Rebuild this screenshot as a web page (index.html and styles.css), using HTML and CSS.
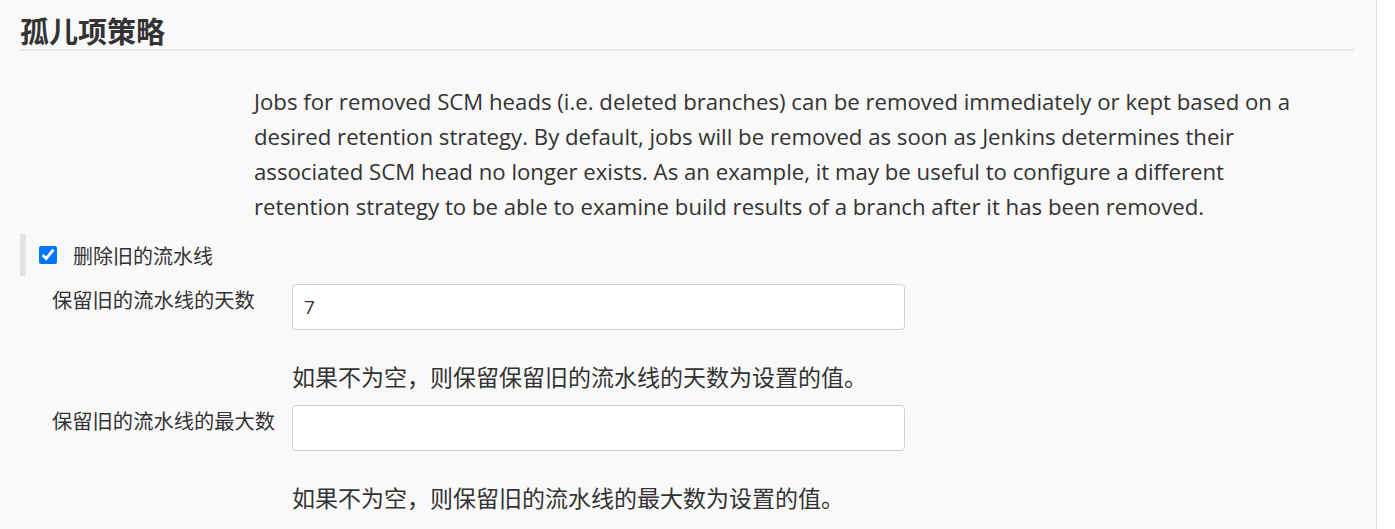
FILE: index.html
```html
<!DOCTYPE html>
<html lang="zh-CN">
<head>
<meta charset="utf-8">
<title>孤儿项策略</title>
<link rel="stylesheet" href="styles.css">
</head>
<body>
<div class="page">
  <main class="content">
    <h2 class="section-title">孤儿项策略</h2>
    <div class="description">Jobs for removed SCM heads (i.e. deleted branches) can be removed immediately or kept based on a desired retention strategy. By default, jobs will be removed as soon as Jenkins determines their associated SCM head no longer exists. As an example, it may be useful to configure a different retention strategy to be able to examine build results of a branch after it has been removed.</div>
    <div class="optional-block">
      <label class="check-row"><input type="checkbox" class="check" checked><span class="check-label">删除旧的流水线</span></label>
    </div>
    <div class="field">
      <div class="field-label">保留旧的流水线的天数</div>
      <div class="field-body">
        <input class="text-input" type="text" value="7">
        <div class="help">如果不为空，则保留保留旧的流水线的天数为设置的值。</div>
      </div>
    </div>
    <div class="field">
      <div class="field-label">保留旧的流水线的最大数</div>
      <div class="field-body">
        <input class="text-input" type="text" value="">
        <div class="help">如果不为空，则保留旧的流水线的最大数为设置的值。</div>
      </div>
    </div>
  </main>
  <aside class="gutter"></aside>
</div>
</body>
</html>
```

FILE: styles.css
```css
html, body {
  margin: 0;
  padding: 0;
  background: #f9f9f9;
}
body {
  font-family: "Open Sans", "Noto Sans CJK SC", sans-serif;
  color: #333;
  height: 529px;
  overflow: hidden;
}
.page {
  display: flex;
  height: 529px;
}
.content {
  flex: 1;
  padding: 0 22px 0 20px;
  background: #f9f9f9;
}
.gutter {
  width: 18px;
  border-left: 1px solid #d9d9d9;
  background: #fff;
}
.section-title {
  margin: 0;
  padding-top: 14px;
  padding-bottom: 3px;
  font-family: "Noto Sans CJK SC", sans-serif;
  font-size: 29px;
  line-height: 32px;
  font-weight: 700;
  color: #333;
  border-bottom: 2px solid #e9e9e9;
}
.description {
  margin: 33px 0 0 234px;
  width: 1070px;
  font-size: 22.2px;
  line-height: 35px;
  color: #333;
}
.optional-block {
  margin-top: 10px;
  border-left: 6px solid #e3e3e3;
  height: 42px;
  display: flex;
  align-items: center;
}
.check-row {
  display: flex;
  align-items: center;
  padding-left: 13px;
}
.check {
  margin: 0;
  width: 18px;
  height: 18px;
  accent-color: #0075ff;
}
.check-label {
  margin-left: 16px;
  font-family: "Noto Sans CJK SC", sans-serif;
  font-size: 20px;
  color: #333;
}
.field {
  display: flex;
  margin-top: 8px;
}
.field-label {
  width: 240px;
  padding-left: 32px;
  font-family: "Noto Sans CJK SC", sans-serif;
  font-size: 20.3px;
  line-height: 28px;
  color: #333;
  padding-top: 1px;
}
.field-body {
  display: flex;
  flex-direction: column;
}
.text-input {
  box-sizing: border-box;
  width: 613px;
  height: 46px;
  margin: 0;
  padding: 0 11px;
  border: 1px solid #d0d0d0;
  border-radius: 4px;
  background: #fff;
  font-family: "Open Sans", sans-serif;
  font-size: 19px;
  color: #333;
  outline: none;
}
.help {
  margin-top: 31px;
  font-family: "Noto Sans CJK SC", sans-serif;
  font-size: 23px;
  line-height: 30px;
  color: #333;
  padding-bottom: 6px;
}
```
